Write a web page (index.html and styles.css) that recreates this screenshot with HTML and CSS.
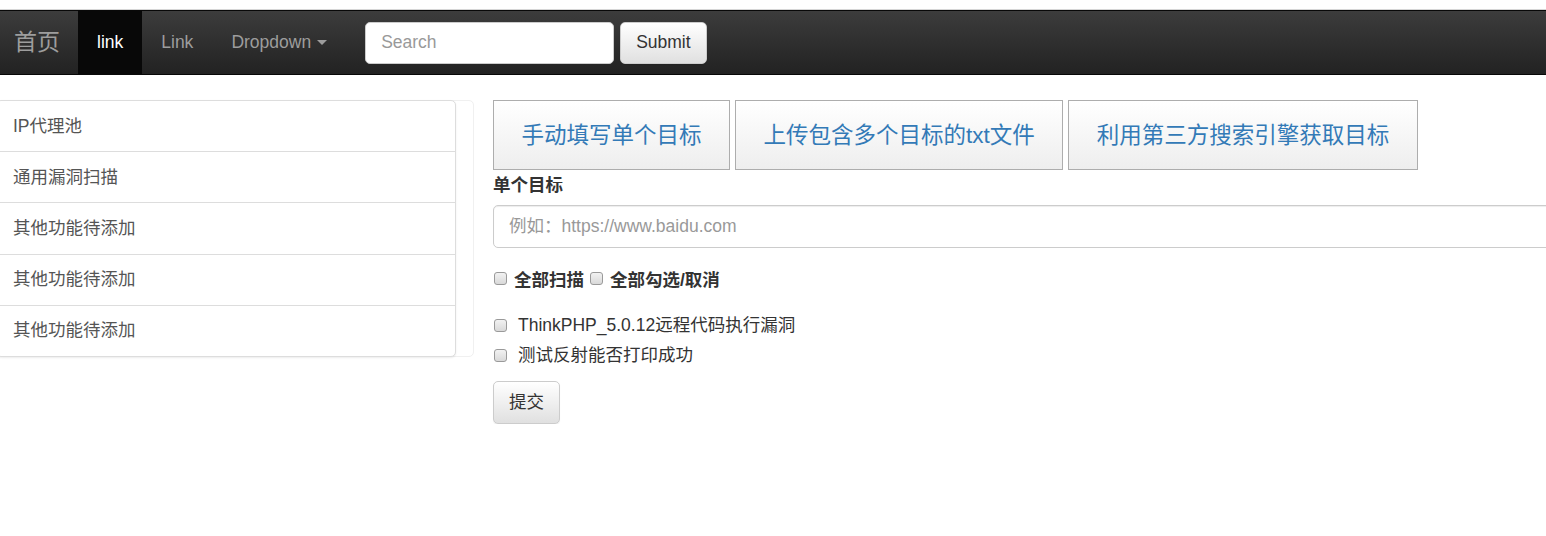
FILE: index.html
```html
<!DOCTYPE html>
<html lang="zh-CN">
<head>
<meta charset="utf-8">
<title>扫描</title>
<link rel="stylesheet" href="styles.css">
</head>
<body>
<nav class="navbar">
  <a class="brand" href="#">首页</a>
  <a class="nav-link active" href="#">link</a>
  <a class="nav-link" href="#">Link</a>
  <a class="nav-link" href="#">Dropdown <span class="caret"></span></a>
  <form class="nav-form">
    <input class="nav-input" type="text" placeholder="Search">
    <button class="btn" type="button">Submit</button>
  </form>
</nav>
<main class="main">
  <aside class="sidebar">
    <div class="list-group">
      <a class="list-item" href="#">IP代理池</a>
      <a class="list-item" href="#">通用漏洞扫描</a>
      <a class="list-item" href="#">其他功能待添加</a>
      <a class="list-item" href="#">其他功能待添加</a>
      <a class="list-item" href="#">其他功能待添加</a>
    </div>
  </aside>
  <section class="content">
    <div class="tabs">
      <button class="tab" type="button">手动填写单个目标</button>
      <button class="tab" type="button">上传包含多个目标的txt文件</button>
      <button class="tab" type="button">利用第三方搜索引擎获取目标</button>
    </div>
    <label class="label">单个目标</label>
    <input class="target-input" type="text" placeholder="例如：https://www.baidu.com">
    <div class="check-all">
      <input class="cb" type="checkbox"><span class="cb-text">全部扫描</span>
      <input class="cb cb-second" type="checkbox"><span class="cb-text">全部勾选/取消</span>
    </div>
    <div class="check-row"><input class="cb" type="checkbox"><span class="row-text">ThinkPHP_5.0.12远程代码执行漏洞</span></div>
    <div class="check-row"><input class="cb" type="checkbox"><span class="row-text">测试反射能否打印成功</span></div>
    <button class="btn btn-submit" type="button">提交</button>
  </section>
</main>
</body>
</html>
```
FILE: styles.css
```css
* { box-sizing: border-box; }
html, body { margin: 0; padding: 0; background: #fff; overflow: hidden; }
body {
  font-family: "Liberation Sans", Arial, "Noto Sans CJK SC", sans-serif;
  font-size: 17.5px;
  line-height: 25px;
  color: #333;
}
a { text-decoration: none; }

.navbar {
  margin-top: 10px;
  height: 65px;
  display: flex;
  align-items: stretch;
  background: linear-gradient(to bottom, #3c3c3c 0%, #222 100%);
  border-top: 1px solid #080808;
  border-bottom: 1px solid #080808;
  box-shadow: 0 -1px 0 #d6d6d6;
}
.brand {
  display: flex;
  align-items: center;
  padding: 0 18px 0 14px;
  font-size: 23px;
  color: #9d9d9d;
}
.nav-link {
  display: flex;
  align-items: center;
  padding: 0 19px;
  color: #9d9d9d;
}
.nav-link.active {
  color: #fff;
  background: #080808;
}
.caret {
  display: inline-block;
  width: 0;
  height: 0;
  margin-left: 6px;
  border-top: 5px solid #9d9d9d;
  border-left: 5px solid transparent;
  border-right: 5px solid transparent;
  vertical-align: middle;
}
.nav-form {
  display: flex;
  align-items: center;
  margin-left: 19px;
  gap: 6px;
}
.nav-input {
  width: 249px;
  height: 42px;
  padding: 0 15px;
  border: 1px solid #ccc;
  border-radius: 5px;
  font: inherit;
  color: #555;
  background: #fff;
}
.nav-input::placeholder, .target-input::placeholder { color: #999; }
.btn {
  height: 42px;
  padding: 0 15px;
  border: 1px solid #ccc;
  border-radius: 5px;
  background: linear-gradient(to bottom, #fff 0%, #e0e0e0 100%);
  font: inherit;
  color: #333;
  box-shadow: inset 0 1px 0 rgba(255,255,255,.15), 0 1px 1px rgba(0,0,0,.075);
}

.main {
  display: flex;
  align-items: flex-start;
  margin-top: 25px;
}
.sidebar {
  width: 478px;
  margin-left: -4px;
  border: 1px solid #f0f0f0;
  border-radius: 5px;
  flex: none;
}
.list-group {
  width: 460px;
  margin: -1px 0 -1px -1px;
  border: 1px solid #ddd;
  border-radius: 5px;
  background: #fff;
  box-shadow: 0 1px 2px rgba(0,0,0,.075);
}
.list-item {
  display: block;
  padding: 12.6px 16px;
  line-height: 25px;
  color: #555;
  border-top: 1px solid #ddd;
}
.list-item:first-child { border-top: 0; }

.content {
  margin-left: 19px;
  width: 1100px;
  flex: none;
}
.tabs { display: flex; gap: 5px; }
.tab {
  height: 70px;
  padding: 0 27.5px;
  border: 1px solid #adadad;
  border-radius: 0;
  background: linear-gradient(to bottom, #fff 0%, #eee 100%);
  font: inherit;
  font-size: 22.5px;
  color: #337ab7;
}
.label {
  display: block;
  margin-top: 3px;
  margin-bottom: 7px;
  font-weight: bold;
}
.target-input {
  display: block;
  width: 1100px;
  height: 42.5px;
  padding: 0 15px;
  border: 1px solid #ccc;
  border-radius: 5px;
  font: inherit;
  color: #555;
  box-shadow: inset 0 1px 1px rgba(0,0,0,.075);
}
.check-all {
  display: flex;
  align-items: center;
  margin-top: 20px;
  height: 25px;
  font-weight: bold;
}
.cb {
  appearance: none;
  -webkit-appearance: none;
  width: 13px;
  height: 13px;
  margin: 0 0 0 1px;
  border: 1px solid #9a9a9a;
  border-radius: 3px;
  background: linear-gradient(to bottom, #f2f2f2, #d9d9d9);
  flex: none;
  position: relative;
  top: -2px;
}
.cb-text { margin-left: 7px; }
.cb-second { margin-left: 6px; }
.check-row {
  display: flex;
  align-items: center;
  height: 25px;
  margin-top: 20px;
}
.check-row + .check-row { margin-top: 5px; }
.check-row .cb { top: 0; }
.row-text { margin-left: 11px; }
.btn-submit {
  margin-top: 13.5px;
  height: 43px;
  width: 67px;
  padding: 0;
}
```
